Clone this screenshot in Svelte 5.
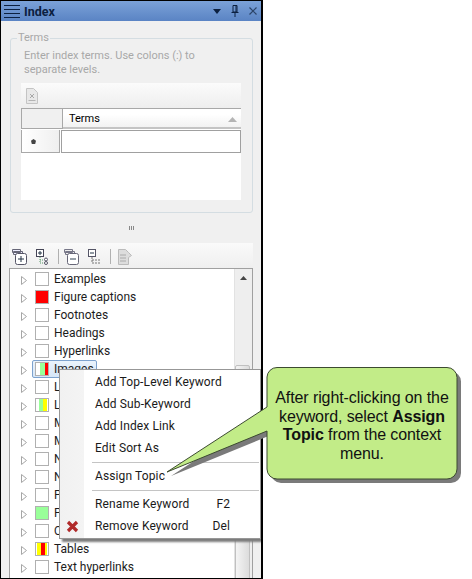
<script>
  const W = '#fff';
  const rows = [
    { t: 'Examples' },
    { t: 'Figure captions', c: ['#f00'], w: [1] },
    { t: 'Footnotes' },
    { t: 'Headings' },
    { t: 'Hyperlinks' },
    { t: 'Images', c: [W, '#9f9', '#f00'], w: [4, 5, 3], sel: true },
    { t: 'Links' },
    { t: 'Lists', c: [W, '#9f9', '#ff0', W], w: [3, 4, 4, 1] },
    { t: 'Macros' },
    { t: 'Master' },
    { t: 'Notes' },
    { t: 'Numbers' },
    { t: 'Pages' },
    { t: 'Popups', c: ['#9f9'], w: [1] },
    { t: 'Queries' },
    { t: 'Tables', c: [W, '#ff0', '#f00', '#ff0', W], w: [1, 4, 4, 2, 1] },
    { t: 'Text hyperlinks' }
  ];
  const menu = [
    { t: 'Add Top-Level Keyword' },
    { t: 'Add Sub-Keyword' },
    { t: 'Add Index Link' },
    { t: 'Edit Sort As' },
    { sep: true },
    { t: 'Assign Topic' },
    { sep: true },
    { t: 'Rename Keyword', k: 'F2' },
    { t: 'Remove Keyword', k: 'Del', x: true }
  ];
</script>

<div class="window">
  <header class="title">
    <svg class="grip" width="16" height="13" viewBox="0 0 16 13"><path d="M0 .5h16M0 4.500h16M0 8.500h16M0 12.500h16" stroke="#0c2040" fill="none"/></svg>
    <span class="name">Index</span>
    <span class="spacer"></span>
    <svg width="8" height="5" viewBox="0 0 8 5"><path d="M0 0h8L4 5z" fill="#0c2040"/></svg>
    <svg class="pin" width="8" height="12" viewBox="0 0 8 12"><path d="M2 .5h4v6.500H2zM5 1v6M.5 7.500h7M4 8v4" stroke="#0c2040" fill="none"/></svg>
    <svg width="8" height="8" viewBox="0 0 8 8"><path d="M.5.500l7 7M7.500.500l-7 7" stroke="#2c4468" stroke-width="1.200" fill="none"/></svg>
  </header>

  <section class="terms">
    <span class="legend">Terms</span>
    <p class="hint">Enter index terms. Use colons (:) to separate levels.</p>
    <div class="grid">
      <div class="gridbar">
        <svg width="12" height="16" viewBox="0 0 12 16"><path d="M.5.500h7l4 4v11H.5z" fill="#e8e8e8" stroke="#c4c4c4"/><path d="M4 6l4 4M8 6l-4 4" stroke="#a8a8a8" fill="none"/><path d="M2.500 12.500h7" stroke="#b4b4b4"/></svg>
      </div>
      <div class="ghead">
        <div class="corner"></div>
        <div class="colhead">Terms<svg width="9" height="5" viewBox="0 0 9 5"><path d="M0 5L4.500 0 9 5z" fill="#b4b4b4"/></svg></div>
      </div>
      <div class="grow">
        <div class="rowhead"><svg width="5" height="5" viewBox="0 0 6 6"><path d="M3 0l3 2.200-1 3.800H1L0 2.200z" fill="#444"/></svg></div>
        <div class="cell"></div>
      </div>
    </div>
  </section>

  <div class="splitter"><i></i><i></i><i></i></div>

  <div class="treebar">
    <svg width="15" height="16" viewBox="0 0 15 16"><path d="M.5.500h8v3h-8zM1.500 2.500h9v3h-9z" fill="#eef" stroke="#667"/><rect x="3.500" y="4.500" width="11" height="11" rx="2" fill="#fff" stroke="#556"/><path d="M6 10h6M9 7v6" stroke="#234"/></svg>
    <svg width="12" height="16" viewBox="0 0 12 16"><rect x=".5" y=".5" width="7" height="7" fill="#fff" stroke="#445"/><path d="M2 4h4M4 2v4" stroke="#234"/><path d="M4 8v6h4M4 11h4" stroke="#596" stroke-dasharray="1 1" fill="none"/><circle cx="10" cy="10.500" r="1.500" fill="#fff" stroke="#556"/><circle cx="10" cy="14" r="1.500" fill="#fff" stroke="#556"/></svg>
    <i class="bar b1"></i>
    <svg width="15" height="16" viewBox="0 0 15 16"><path d="M.5.500h8v3h-8zM1.500 2.500h9v3h-9z" fill="#eee" stroke="#778"/><rect x="3.500" y="4.500" width="11" height="11" rx="2" fill="#fff" stroke="#667"/><path d="M6 10h6" stroke="#345"/></svg>
    <svg width="13" height="16" viewBox="0 0 13 16"><rect x=".5" y=".5" width="7" height="7" fill="#fff" stroke="#556"/><path d="M2 4h4" stroke="#234"/><path d="M4 8v6h2M4 11h2M7 11h6M7 14h6" stroke="#777" stroke-dasharray="2 1" fill="none"/></svg>
    <i class="bar b2"></i>
    <svg width="14" height="16" viewBox="0 0 14 16"><path d="M.5.500h7l3 3 3 3-3 2v7H.5z" fill="#ddd" stroke="#bbb"/><path d="M2 6h6M2 9h6M2 12h6" stroke="#aaa"/></svg>
  </div>

  <div class="tree">
    <div class="rows">
      {#each rows as r}
        <div class="row">
          <svg class="arrow" width="6" height="9" viewBox="0 0 6 9"><path d="M.5.500l5 4-5 4z" fill="#fff" stroke="#a6a6a6"/></svg>
          <span class="item" class:sel={r.sel}>
            <span class="swatch">
              {#if r.c}
                {#each r.c as col, i}
                  <b style="background:{col};flex:{r.w[i]}"></b>
                {/each}
              {/if}
            </span>
            <span class="label">{r.t}</span>
          </span>
        </div>
      {/each}
    </div>
    <div class="scroll">
      <div class="sbtn"><svg width="7" height="4" viewBox="0 0 7 4"><path d="M0 4l3.500-4L7 4z" fill="#444"/></svg></div>
      <div class="thumb"></div>
    </div>
  </div>

  <div class="menu">
    {#each menu as m}
      {#if m.sep}
        <div class="sep"></div>
      {:else}
        <div class="mi">
          <span class="ico">
            {#if m.x}<svg width="13" height="13" viewBox="0 0 13 13"><path d="M2 2l9 9M11 2l-9 9" stroke="#b02a2a" stroke-width="3.200" fill="none"/></svg>{/if}
          </span>
          <span class="mt">{m.t}</span>
          {#if m.k}<span class="mk">{m.k}</span>{/if}
        </div>
      {/if}
    {/each}
  </div>
</div>

<svg class="callout" width="300" height="125" viewBox="0 0 300 125">
  <path transform="translate(4 4)" d="M111 .5H281a10 10 0 0 1 10 10V102a10 10 0 0 1-10 10H111a10 10 0 0 1-10-10V64L1 105 101 40V10A10 10 0 0 1 111 .5Z" fill="#7a7a7a"/>
  <path d="M111 .5H281a10 10 0 0 1 10 10V102a10 10 0 0 1-10 10H111a10 10 0 0 1-10-10V64L1 105 101 40V10A10 10 0 0 1 111 .5Z" fill="#c2ec88" stroke="#3c4a30"/>
</svg>
<div class="say">After right-clicking on the keyword, select <b>Assign Topic</b> from the context menu.</div>

<style>
  :global(body) { margin: 0; background: #fff; }
  :global(#app) { position: relative; width: 472px; height: 579px; overflow: hidden; }
  .window {
    box-sizing: border-box; width: 263px; height: 579px; position: relative; overflow: hidden;
    background: #f0f0f0; border: 1px solid #000; border-right-width: 2px;
    font: 12px/18px Roboto, "Open Sans", sans-serif; color: #1a1a1a;
  }
  .title {
    height: 20px; display: flex; align-items: center; padding: 0 4px 0 3px;
    background: linear-gradient(#7ba2d8, #5a84c4);
  }
  .name { margin-left: 4px; font: bold 12.500px Roboto, sans-serif; color: #0c2040; }
  .spacer { flex: 1; }
  .pin { margin: 0 10px; }
  .terms {
    position: relative; box-sizing: border-box; margin: 17px 0 0 9px; width: 243px; height: 175px;
    border: 1px solid #d4dde2; border-radius: 3px; padding: 10px 10px 0;
  }
  .legend { position: absolute; left: 6px; top: -9px; padding: 0 1px; background: #f0f0f0; color: #a8a8a8; line-height: 16px; font-size: 11px; }
  .hint { margin: 0 0 0 3px; color: #a8a8a8; font-size: 11px; line-height: 14px; width: 200px; }
  .grid { margin-top: 6px; width: 220px; height: 117px; background: #fff; }
  .gridbar { height: 25px; display: flex; align-items: center; padding-left: 5px; background: linear-gradient(#fbfbfb, #eeeeee); }
  .ghead { display: flex; height: 21px; border-top: 1px solid #a8a8a8; box-sizing: border-box; }
  .corner { width: 40px; border-left: 1px solid #a8a8a8; border-right: 1px solid #a8a8a8; border-bottom: 1px solid #a8a8a8; background: #f0f0f0; }
  .colhead {
    flex: 1; display: flex; align-items: center; justify-content: space-between; padding: 2px 4px 0 6px; font-size: 11px; line-height: 16px; color: #000;
    background: linear-gradient(#fff 30%, #f2f2f2); border-bottom: 2px solid #c4c4c4;
  }
  .grow { display: flex; height: 23px; margin-top: 1px; }
  .rowhead { box-sizing: border-box; width: 39px; border: 1px solid #a8a8a8; border-top: none; display: flex; align-items: center; justify-content: center; background: linear-gradient(90deg, #fff, #efefef); padding-right: 14px; }
  .cell { box-sizing: border-box; flex: 1; margin-left: 1px; border: 1px solid #a0a0a0; }
  .splitter { height: 30px; display: flex; align-items: center; justify-content: center; gap: 1px; }
  .splitter i { width: 1px; height: 4px; background: #888; }
  .treebar {
    box-sizing: border-box; margin-left: 8px; width: 244px; height: 25px; display: flex; align-items: center; gap: 9px; padding: 2px 0 0 3px;
    background: linear-gradient(#fafafa, #efefef);
  }
  .bar { width: 1px; height: 15px; background: #b0b0b0; }
  .b1 { margin: 0 -4px 0 1px; }
  .b2 { margin: 0 -2px 0 0; }
  .tree { box-sizing: border-box; margin-left: 8px; width: 244px; height: 320px; border: 1px solid #a0a0a0; border-bottom: none; background: #fff; display: flex; overflow: hidden; }
  .rows { flex: 1; padding-top: 1px; }
  .row { display: flex; align-items: center; height: 18px; }
  .arrow { margin-left: 11px; margin-top: 2px; }
  .item { box-sizing: border-box; display: flex; align-items: center; height: 18px; margin-left: 5px; padding: 0 2px; border: 1px solid transparent; border-radius: 2px; }
  .item.sel { border-color: #7da2ce; background: linear-gradient(#eaf3fc, #d6e6f8); }
  .swatch { box-sizing: border-box; width: 14px; height: 14px; border: 1px solid #b0b0b0; display: flex; background: #fff; }
  .swatch b { display: block; height: 100%; }
  .label { margin-left: 5px; color: #1c1c1c; white-space: nowrap; }
  .scroll { width: 17px; background: #eeeeee; border-left: 1px solid #e2e2e2; }
  .sbtn { height: 17px; display: flex; align-items: center; justify-content: center; }
  .thumb { margin: 79px 2px 0 0; height: 215px; background: linear-gradient(90deg, #f4f4f4, #dcdcdc); border: 1px solid #c0c0c0; border-radius: 2px; }
  .menu {
    position: absolute; left: 58px; top: 368px; box-sizing: border-box; width: 202px; height: 170px;
    background: linear-gradient(90deg, #f1f1f1 0, #f4f4f4 24px, #fff 24px); border: 1px solid #979797;
    box-shadow: 3px 3px 2px #7c7c7c; padding: 1px 2px;
  }
  .mi { display: flex; align-items: center; height: 22px; color: #1a1a1a; letter-spacing: .12px; }
  .ico { width: 33px; display: flex; justify-content: flex-start; padding-left: 4px; box-sizing: border-box; }
  .mt { flex: 1; }
  .mk { padding-right: 28px; }
  .sep { height: 1px; background: #c4c4c4; margin: 3px -1px 2px 30px; }
  .callout { position: absolute; left: 166px; top: 367px; }
  .say {
    position: absolute; left: 267px; top: 389px; width: 190px; text-align: center;
    font: 16px/18.700px "Liberation Sans", Arial, sans-serif; letter-spacing: -.1px; color: #111;
  }
</style>
